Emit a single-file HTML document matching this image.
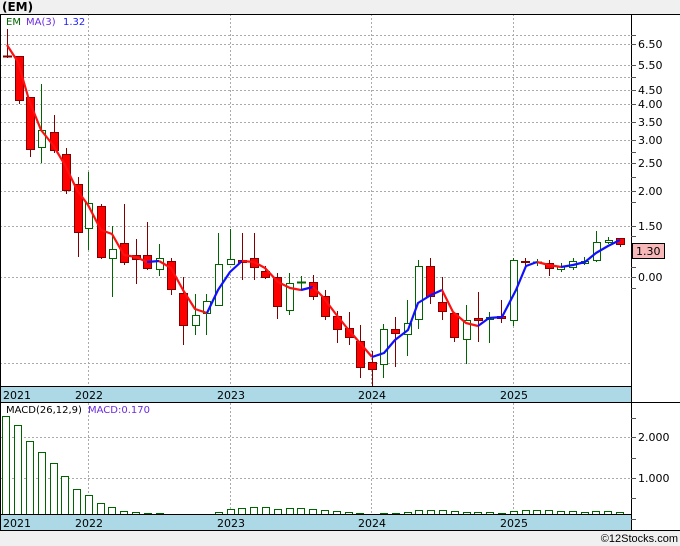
<!DOCTYPE html>
<html><head><meta charset="utf-8"><style>
html,body{margin:0;padding:0;background:#f0f0f0;}
svg{display:block;font-family:"DejaVu Sans","Liberation Sans",sans-serif;}
</style></head><body>
<svg width="680" height="546" viewBox="0 0 680 546" xmlns="http://www.w3.org/2000/svg">
<rect x="0" y="0" width="680" height="546" fill="#f0f0f0"/>
<text x="2" y="11" font-size="12" font-weight="bold" fill="#000">(EM)</text>
<!-- panels -->
<rect x="0" y="14" width="680" height="517" fill="#fff"/>
<!-- grid top -->
<g stroke="#aaa" stroke-width="1" stroke-dasharray="2,2" fill="none">
<line x1="0" y1="35.5" x2="631" y2="35.5"/><line x1="0" y1="44.5" x2="631" y2="44.5"/>
<line x1="0" y1="65.5" x2="631" y2="65.5"/><line x1="0" y1="77.5" x2="631" y2="77.5"/>
<line x1="0" y1="90.5" x2="631" y2="90.5"/><line x1="0" y1="104.5" x2="631" y2="104.5"/>
<line x1="0" y1="122.5" x2="631" y2="122.5"/><line x1="0" y1="140.5" x2="631" y2="140.5"/>
<line x1="0" y1="163.5" x2="631" y2="163.5"/><line x1="0" y1="191.5" x2="631" y2="191.5"/>
<line x1="0" y1="226.5" x2="631" y2="226.5"/><line x1="0" y1="277.5" x2="631" y2="277.5"/>
<line x1="0" y1="363.5" x2="631" y2="363.5"/>
<line x1="88.5" y1="14" x2="88.5" y2="387"/><line x1="230.5" y1="14" x2="230.5" y2="387"/>
<line x1="371.5" y1="14" x2="371.5" y2="387"/><line x1="513.5" y1="14" x2="513.5" y2="387"/>
<line x1="0" y1="437.5" x2="631" y2="437.5"/><line x1="0" y1="478.5" x2="631" y2="478.5"/>
<line x1="88.5" y1="403" x2="88.5" y2="515"/><line x1="230.5" y1="403" x2="230.5" y2="515"/>
<line x1="371.5" y1="403" x2="371.5" y2="515"/><line x1="513.5" y1="403" x2="513.5" y2="515"/>
</g>
<text x="6" y="25" font-size="10" fill="#006400">EM</text>
<text x="26" y="25" font-size="10" fill="#6a2be2">MA(3)</text>
<text x="63" y="25" font-size="10" fill="#2020ff">1.32</text>
<!-- candles -->
<g stroke="#800000" stroke-width="1">
<line x1="7.5" y1="29" x2="7.5" y2="58"/><line x1="3" y1="56.5" x2="12" y2="56.5" stroke-width="2"/>
<line x1="19.5" y1="56" x2="19.5" y2="104"/><rect x="15.5" y="56.5" width="8" height="44" fill="#f00"/>
<line x1="30.5" y1="97" x2="30.5" y2="157"/><rect x="26.5" y="97.5" width="8" height="52" fill="#f00"/>
<line x1="54.5" y1="115" x2="54.5" y2="153"/><rect x="50.5" y="132.5" width="8" height="18" fill="#f00"/>
<line x1="66.5" y1="148" x2="66.5" y2="194"/><rect x="62.5" y="154.5" width="8" height="36" fill="#f00"/>
<line x1="78.5" y1="177" x2="78.5" y2="257"/><rect x="74.5" y="184.5" width="8" height="48" fill="#f00"/>
<line x1="101.5" y1="204" x2="101.5" y2="259"/><rect x="97.5" y="206.5" width="8" height="51" fill="#f00"/>
<line x1="124.5" y1="204" x2="124.5" y2="265"/><rect x="120.5" y="243.5" width="8" height="19" fill="#f00"/>
<line x1="136.5" y1="239" x2="136.5" y2="284"/><rect x="132.5" y="255.5" width="8" height="4" fill="#f00"/>
<line x1="147.5" y1="222" x2="147.5" y2="270"/><rect x="143.5" y="255.5" width="8" height="13" fill="#f00"/>
<line x1="171.5" y1="258" x2="171.5" y2="295"/><rect x="167.5" y="261.5" width="8" height="28" fill="#f00"/>
<line x1="183.5" y1="277" x2="183.5" y2="345"/><rect x="179.5" y="293.5" width="8" height="32" fill="#f00"/>
<line x1="242.5" y1="233" x2="242.5" y2="280"/><rect x="238.5" y="260.5" width="8" height="2" fill="#f00"/>
<line x1="254.5" y1="233" x2="254.5" y2="280"/><rect x="250.5" y="258.5" width="8" height="9" fill="#f00"/>
<line x1="265.5" y1="266" x2="265.5" y2="279"/><rect x="261.5" y="271.5" width="8" height="6" fill="#f00"/>
<line x1="277.5" y1="273" x2="277.5" y2="319"/><rect x="273.5" y="277.5" width="8" height="29" fill="#f00"/>
<line x1="313.5" y1="275" x2="313.5" y2="300"/><rect x="309.5" y="282.5" width="8" height="14" fill="#f00"/>
<line x1="325.5" y1="290" x2="325.5" y2="320"/><rect x="321.5" y="296.5" width="8" height="20" fill="#f00"/>
<line x1="337.5" y1="311" x2="337.5" y2="343"/><rect x="333.5" y="316.5" width="8" height="13" fill="#f00"/>
<line x1="349.5" y1="312" x2="349.5" y2="345"/><rect x="345.5" y="328.5" width="8" height="9" fill="#f00"/>
<line x1="360.5" y1="325" x2="360.5" y2="378"/><rect x="356.5" y="341.5" width="8" height="26" fill="#f00"/>
<line x1="372.5" y1="351" x2="372.5" y2="386"/><rect x="368.5" y="362.5" width="8" height="7" fill="#f00"/>
<line x1="395.5" y1="317" x2="395.5" y2="367"/><rect x="391.5" y="329.5" width="8" height="4" fill="#f00"/>
<line x1="430.5" y1="258" x2="430.5" y2="304"/><rect x="426.5" y="266.5" width="8" height="30" fill="#f00"/>
<line x1="442.5" y1="277" x2="442.5" y2="320"/><rect x="438.5" y="302.5" width="8" height="9" fill="#f00"/>
<line x1="454.5" y1="313" x2="454.5" y2="342"/><rect x="450.5" y="313.5" width="8" height="24" fill="#f00"/>
<line x1="478.5" y1="292" x2="478.5" y2="342"/><rect x="474.5" y="318.5" width="8" height="2" fill="#f00"/>
<line x1="501.5" y1="300" x2="501.5" y2="323"/><rect x="497.5" y="316.5" width="8" height="2" fill="#f00"/>
<line x1="525.5" y1="258" x2="525.5" y2="266"/><rect x="521.5" y="261.5" width="8" height="1" fill="#f00"/>
<line x1="549.5" y1="260" x2="549.5" y2="276"/><rect x="545.5" y="263.5" width="8" height="5" fill="#f00"/>
<line x1="620.5" y1="238" x2="620.5" y2="247"/><rect x="616.5" y="238.5" width="8" height="6" fill="#f00"/>
</g>
<g stroke="#006400" stroke-width="1" fill="#fff">
<line x1="41.5" y1="84" x2="41.5" y2="163"/><rect x="38.5" y="130.5" width="7" height="17"/>
<line x1="88.5" y1="172" x2="88.5" y2="250"/><rect x="85.5" y="203.5" width="7" height="25"/>
<line x1="112.5" y1="226" x2="112.5" y2="297"/><rect x="109.5" y="249.5" width="7" height="9"/>
<line x1="159.5" y1="244" x2="159.5" y2="276"/><rect x="156.5" y="258.5" width="7" height="11"/>
<line x1="195.5" y1="294" x2="195.5" y2="335"/><rect x="192.5" y="315.5" width="7" height="10"/>
<line x1="206.5" y1="294" x2="206.5" y2="335"/><rect x="203.5" y="301.5" width="7" height="12"/>
<line x1="218.5" y1="233" x2="218.5" y2="306"/><rect x="215.5" y="264.5" width="7" height="41"/>
<line x1="230.5" y1="229" x2="230.5" y2="262"/><rect x="227.5" y="259.5" width="7" height="5"/>
<line x1="289.5" y1="273" x2="289.5" y2="315"/><rect x="286.5" y="283.5" width="7" height="27"/>
<line x1="301.5" y1="276" x2="301.5" y2="290"/><line x1="297" y1="282.5" x2="306" y2="282.5" stroke-width="2"/>
<line x1="383.5" y1="324" x2="383.5" y2="378"/><rect x="380.5" y="329.5" width="7" height="35"/>
<line x1="407.5" y1="300" x2="407.5" y2="356"/><rect x="404.5" y="323.5" width="7" height="11"/>
<line x1="418.5" y1="260" x2="418.5" y2="329"/><rect x="415.5" y="266.5" width="7" height="53"/>
<line x1="466.5" y1="305" x2="466.5" y2="364"/><rect x="463.5" y="320.5" width="7" height="19"/>
<line x1="489.5" y1="312" x2="489.5" y2="343"/><rect x="486.5" y="317.5" width="7" height="2"/>
<line x1="513.5" y1="258" x2="513.5" y2="326"/><rect x="510.5" y="260.5" width="7" height="60"/>
<line x1="537.5" y1="259" x2="537.5" y2="266"/><line x1="533" y1="262.5" x2="542" y2="262.5" stroke-width="2"/>
<line x1="561.5" y1="263" x2="561.5" y2="272"/><rect x="557.5" y="266.5" width="7" height="3"/>
<line x1="573.5" y1="258" x2="573.5" y2="270"/><rect x="569.5" y="261.5" width="7" height="6"/>
<line x1="584.5" y1="257" x2="584.5" y2="265"/><rect x="581.5" y="261.5" width="7" height="2"/>
<line x1="596.5" y1="231" x2="596.5" y2="262"/><rect x="593.5" y="242.5" width="7" height="18"/>
<line x1="608.5" y1="237" x2="608.5" y2="244"/><rect x="605.5" y="240.5" width="7" height="2"/>
</g>
<!-- MA -->
<g fill="none" stroke-width="2.2" stroke-linejoin="round">
<polyline stroke="#ff1010" points="7,45 18,62 29,100 41,130 53,145 65,165 77,190 88,205 101,230 112,234 124,255 136,257 147,262"/>
<polyline stroke="#1010ff" points="147,262 159,261"/>
<polyline stroke="#ff1010" points="159,261 171,268 183,290 195,309 207,313"/>
<polyline stroke="#1010ff" points="207,313 218,290 230,272 242,261"/>
<polyline stroke="#ff1010" points="242,261 254,262 265,268 278,282 290,288 301,290"/>
<polyline stroke="#1010ff" points="301,290 313,287"/>
<polyline stroke="#ff1010" points="313,287 323,297 335,313 347,328 360,343 372,357"/>
<polyline stroke="#1010ff" points="372,357 384,353 395,340 408,330 418,303 431,295 442,290"/>
<polyline stroke="#ff1010" points="442,290 453,312 466,323 478,326"/>
<polyline stroke="#1010ff" points="478,326 489,318 502,317 516,290 526,266 537,262"/>
<polyline stroke="#ff1010" points="537,262 549,265 561,267"/>
<polyline stroke="#1010ff" points="561,267 573,265 585,262 596,253 608,246 620,240"/>
</g>
<!-- MACD bars -->
<g stroke="#006400" fill="#fff" stroke-width="1">
<rect x="2.5" y="416.5" width="7" height="99"/><rect x="14.5" y="425.5" width="7" height="90"/>
<rect x="26.5" y="441.5" width="7" height="74"/><rect x="38.5" y="452.5" width="7" height="63"/>
<rect x="50.5" y="463.5" width="7" height="52"/><rect x="61.5" y="476.5" width="7" height="39"/>
<rect x="73.5" y="489.5" width="7" height="26"/><rect x="85.5" y="495.5" width="7" height="20"/>
<rect x="97.5" y="503.5" width="7" height="12"/><rect x="108.5" y="507.5" width="7" height="8"/>
<rect x="120.5" y="511.5" width="7" height="4"/><rect x="132.5" y="512.5" width="7" height="3"/>
<rect x="144.5" y="513.5" width="7" height="2"/><rect x="156.5" y="513.5" width="7" height="2"/>
<rect x="167.5" y="514.5" width="7" height="1"/>
<rect x="203.5" y="514.5" width="7" height="1"/><rect x="215.5" y="512.5" width="7" height="3"/>
<rect x="227.5" y="509.5" width="7" height="6"/><rect x="238.5" y="508.5" width="7" height="7"/>
<rect x="250.5" y="507.5" width="7" height="8"/><rect x="262.5" y="507.5" width="7" height="8"/>
<rect x="274.5" y="509.5" width="7" height="6"/><rect x="286.5" y="508.5" width="7" height="7"/>
<rect x="297.5" y="508.5" width="7" height="7"/><rect x="309.5" y="509.5" width="7" height="6"/>
<rect x="321.5" y="510.5" width="7" height="5"/><rect x="333.5" y="511.5" width="7" height="4"/>
<rect x="345.5" y="512.5" width="7" height="3"/><rect x="356.5" y="513.5" width="7" height="2"/>
<rect x="368.5" y="514.5" width="7" height="1"/><rect x="380.5" y="513.5" width="7" height="2"/>
<rect x="392.5" y="513.5" width="7" height="2"/><rect x="404.5" y="512.5" width="7" height="3"/>
<rect x="415.5" y="510.5" width="7" height="5"/><rect x="427.5" y="510.5" width="7" height="5"/>
<rect x="439.5" y="510.5" width="7" height="5"/><rect x="451.5" y="511.5" width="7" height="4"/>
<rect x="463.5" y="512.5" width="7" height="3"/><rect x="474.5" y="512.5" width="7" height="3"/>
<rect x="486.5" y="512.5" width="7" height="3"/><rect x="498.5" y="513.5" width="7" height="2"/>
<rect x="510.5" y="511.5" width="7" height="4"/><rect x="522.5" y="510.5" width="7" height="5"/>
<rect x="533.5" y="510.5" width="7" height="5"/><rect x="545.5" y="510.5" width="7" height="5"/>
<rect x="557.5" y="511.5" width="7" height="4"/><rect x="569.5" y="511.5" width="7" height="4"/>
<rect x="581.5" y="512.5" width="7" height="3"/><rect x="592.5" y="511.5" width="7" height="4"/>
<rect x="604.5" y="511.5" width="7" height="4"/><rect x="616.5" y="512.5" width="7" height="3"/>
</g>
<text x="6" y="413" font-size="10" fill="#000">MACD(26,12,9)</text>
<text x="88" y="413" font-size="10" fill="#6a2be2">MACD:0.170</text>
<!-- axis bands -->
<rect x="0" y="387" width="631" height="16" fill="#add8e6"/>
<rect x="0" y="515" width="631" height="16" fill="#add8e6"/>
<g font-size="11" fill="#000">
<text x="3" y="399">2021</text><text x="75" y="399">2022</text><text x="217" y="399">2023</text><text x="358" y="399">2024</text><text x="500" y="399">2025</text>
<text x="3" y="527">2021</text><text x="75" y="527">2022</text><text x="217" y="527">2023</text><text x="358" y="527">2024</text><text x="500" y="527">2025</text>
</g>
<!-- borders -->
<g stroke="#000" stroke-width="1" fill="none">
<line x1="0" y1="14.5" x2="680" y2="14.5"/>
<line x1="0.5" y1="14" x2="0.5" y2="531"/>
<line x1="631.5" y1="14" x2="631.5" y2="531"/>
<line x1="0" y1="386.5" x2="631" y2="386.5"/>
<line x1="0" y1="402.5" x2="680" y2="402.5"/>
<line x1="0" y1="514.5" x2="631" y2="514.5"/>
<line x1="0" y1="530.5" x2="680" y2="530.5"/>
</g>
<!-- right ticks -->
<g stroke="#555" stroke-width="1">
<line x1="631" y1="35.5" x2="636" y2="35.5"/><line x1="631" y1="44.5" x2="636" y2="44.5"/>
<line x1="631" y1="65.5" x2="636" y2="65.5"/><line x1="631" y1="77.5" x2="636" y2="77.5"/>
<line x1="631" y1="90.5" x2="636" y2="90.5"/><line x1="631" y1="104.5" x2="636" y2="104.5"/>
<line x1="631" y1="122.5" x2="636" y2="122.5"/><line x1="631" y1="140.5" x2="636" y2="140.5"/>
<line x1="631" y1="152.5" x2="636" y2="152.5"/><line x1="631" y1="163.5" x2="636" y2="163.5"/>
<line x1="631" y1="177.5" x2="636" y2="177.5"/><line x1="631" y1="191.5" x2="636" y2="191.5"/>
<line x1="631" y1="202.5" x2="636" y2="202.5"/><line x1="631" y1="226.5" x2="636" y2="226.5"/>
<line x1="631" y1="236.5" x2="636" y2="236.5"/><line x1="631" y1="267.5" x2="636" y2="267.5"/>
<line x1="631" y1="277.5" x2="636" y2="277.5"/><line x1="631" y1="288.5" x2="636" y2="288.5"/>
<line x1="631" y1="418.5" x2="636" y2="418.5"/><line x1="631" y1="437.5" x2="636" y2="437.5"/>
<line x1="631" y1="458.5" x2="636" y2="458.5"/><line x1="631" y1="478.5" x2="636" y2="478.5"/>
<line x1="631" y1="498.5" x2="636" y2="498.5"/><line x1="631" y1="519.5" x2="636" y2="519.5"/>
</g>
<g font-size="11" fill="#000">
<text x="638" y="48">6.50</text><text x="638" y="69">5.50</text><text x="638" y="94">4.50</text>
<text x="638" y="108">4.00</text><text x="638" y="126">3.50</text><text x="638" y="144">3.00</text>
<text x="638" y="167">2.50</text><text x="638" y="195">2.00</text><text x="638" y="230">1.50</text>
<text x="638" y="281">0.00</text>
<text x="638" y="441">2.000</text><text x="638" y="482">1.000</text>
</g>
<rect x="632.5" y="243.5" width="32" height="15" fill="#f6b8b8" stroke="#000"/>
<text x="636" y="255" font-size="11" fill="#000">1.30</text>
<text x="678" y="542" font-size="11" fill="#000" text-anchor="end" font-family="Liberation Sans, sans-serif">©12Stocks.com</text>
</svg>
</body></html>
